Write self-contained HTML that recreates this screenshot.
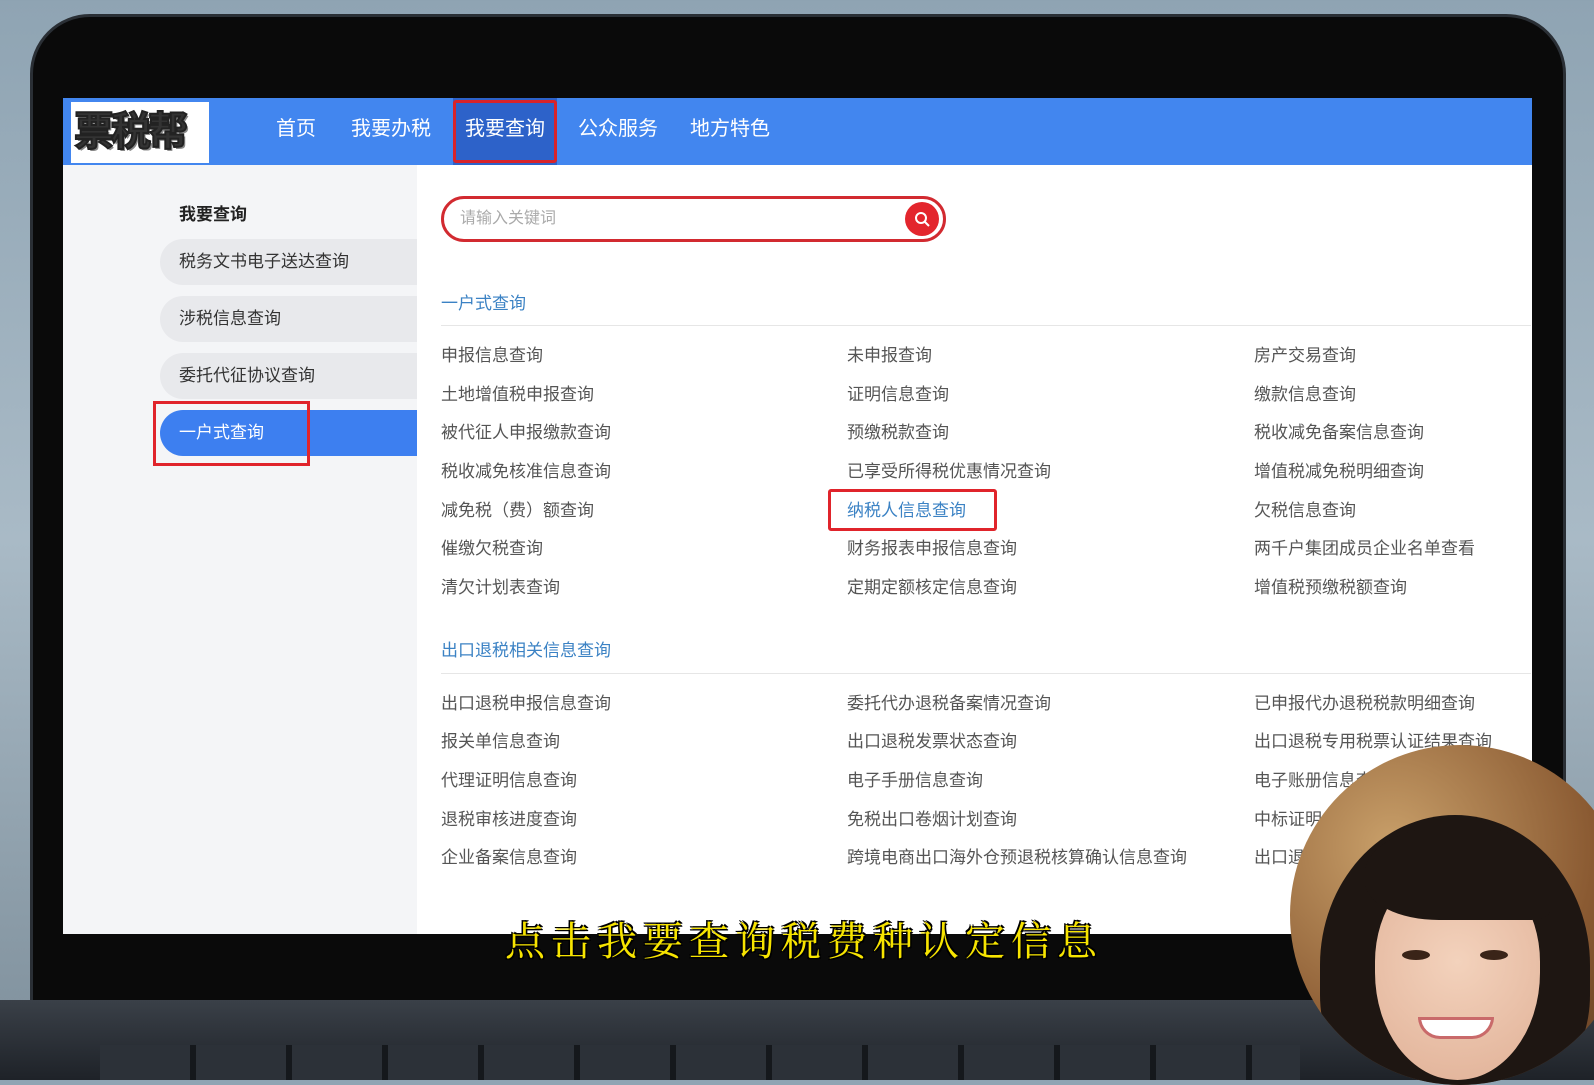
<!DOCTYPE html>
<html><head><meta charset="utf-8"><style>
*{margin:0;padding:0;box-sizing:border-box}
body{width:1594px;height:1080px;overflow:hidden;position:relative;font-family:"Liberation Sans","Noto Sans CJK SC",sans-serif;background:linear-gradient(180deg,#8fa4b3 0%,#a9bac6 50%,#7d8e9a 100%)}
.abs{position:absolute}
.t{position:absolute;font-size:17px;color:#555;white-space:nowrap;line-height:20px}
</style></head><body>
<div class="abs" style="left:30px;top:14px;width:1536px;height:1010px;background:#0a0a0a;border-radius:60px 60px 0 0;border:3px solid #2a2f35"></div>
<div class="abs" style="left:0;top:1000px;width:1594px;height:80px;background:linear-gradient(180deg,#3a4048,#1e2228)"></div>
<div class="abs" style="left:100px;top:1045px;width:1200px;height:35px;background:repeating-linear-gradient(90deg,#2c3138 0 90px,#15181c 90px 96px)"></div>
<div class="abs" style="left:63px;top:98px;width:1469px;height:836px;background:#fff"></div>
<div class="abs" style="left:63px;top:98px;width:1469px;height:67px;background:#4286ef"></div>
<div class="abs" style="left:71px;top:102px;width:138px;height:61px;background:#fff"></div>
<div class="abs" style="left:74px;top:104px;font-size:40px;font-weight:bold;color:#333;letter-spacing:-3px;line-height:56px;-webkit-text-stroke:2px #222;text-shadow:2px 2px 0 #888">票税帮</div>
<div class="abs" style="left:453px;top:98px;width:104px;height:67px;background:#2d62c9"></div>
<div class="abs" style="left:453px;top:100px;width:104px;height:63px;border:3px solid #d8232a;border-radius:3px"></div>
<div class="abs" style="top:117px;left:276px;font-size:20px;color:#fff;line-height:24px">首页</div>
<div class="abs" style="top:117px;left:351px;font-size:20px;color:#fff;line-height:24px">我要办税</div>
<div class="abs" style="top:117px;left:465px;font-size:20px;color:#fff;line-height:24px">我要查询</div>
<div class="abs" style="top:117px;left:578px;font-size:20px;color:#fff;line-height:24px">公众服务</div>
<div class="abs" style="top:117px;left:690px;font-size:20px;color:#fff;line-height:24px">地方特色</div>
<div class="abs" style="left:63px;top:165px;width:354px;height:769px;background:#f4f5f7"></div>
<div class="abs" style="left:179px;top:200px;font-size:17px;font-weight:bold;color:#222">我要查询</div>
<div class="abs" style="left:160px;top:239px;width:257px;height:46px;background:#e8e9ec;border-radius:23px 0 0 23px"></div>
<div class="abs" style="left:160px;top:296px;width:257px;height:46px;background:#e8e9ec;border-radius:23px 0 0 23px"></div>
<div class="abs" style="left:160px;top:353px;width:257px;height:46px;background:#e8e9ec;border-radius:23px 0 0 23px"></div>
<div class="abs" style="left:160px;top:410px;width:257px;height:46px;background:#3d7ff0;border-radius:23px 0 0 23px"></div>
<div class="abs" style="left:153px;top:401px;width:157px;height:65px;border:3px solid #e0242b"></div>
<div class="t" style="left:179px;top:252px;color:#333">税务文书电子送达查询</div>
<div class="t" style="left:179px;top:309px;color:#333">涉税信息查询</div>
<div class="t" style="left:179px;top:366px;color:#333">委托代征协议查询</div>
<div class="t" style="left:179px;top:423px;color:#fff">一户式查询</div>
<div class="abs" style="left:441px;top:196px;width:505px;height:46px;border:3px solid #d22a30;border-radius:23px"></div>
<div class="t" style="left:460px;top:209px;color:#aaa;font-size:16px">请输入关键词</div>
<div class="abs" style="left:905px;top:202px;width:34px;height:34px;border-radius:50%;background:#e3262d"></div>
<svg class="abs" style="left:913px;top:210px" width="18" height="18" viewBox="0 0 18 18"><circle cx="8" cy="8" r="5" fill="none" stroke="#fff" stroke-width="2"/><path d="M12 12l4 4" stroke="#fff" stroke-width="2"/></svg>
<div class="t" style="left:441px;top:294px;color:#3b82c4">一户式查询</div>
<div class="abs" style="left:441px;top:325px;width:1090px;height:1px;background:#e6e6e6"></div>
<div class="t" style="left:441px;top:346px">申报信息查询</div>
<div class="t" style="left:441px;top:385px">土地增值税申报查询</div>
<div class="t" style="left:441px;top:423px">被代征人申报缴款查询</div>
<div class="t" style="left:441px;top:462px">税收减免核准信息查询</div>
<div class="t" style="left:441px;top:501px">减免税（费）额查询</div>
<div class="t" style="left:441px;top:539px">催缴欠税查询</div>
<div class="t" style="left:441px;top:578px">清欠计划表查询</div>
<div class="t" style="left:847px;top:346px">未申报查询</div>
<div class="t" style="left:847px;top:385px">证明信息查询</div>
<div class="t" style="left:847px;top:423px">预缴税款查询</div>
<div class="t" style="left:847px;top:462px">已享受所得税优惠情况查询</div>
<div class="t" style="left:847px;top:501px;color:#3b82c4">纳税人信息查询</div>
<div class="abs" style="left:828px;top:489px;width:169px;height:42px;border:3px solid #e0242b;border-radius:3px"></div>
<div class="t" style="left:847px;top:539px">财务报表申报信息查询</div>
<div class="t" style="left:847px;top:578px">定期定额核定信息查询</div>
<div class="t" style="left:1254px;top:346px">房产交易查询</div>
<div class="t" style="left:1254px;top:385px">缴款信息查询</div>
<div class="t" style="left:1254px;top:423px">税收减免备案信息查询</div>
<div class="t" style="left:1254px;top:462px">增值税减免税明细查询</div>
<div class="t" style="left:1254px;top:501px">欠税信息查询</div>
<div class="t" style="left:1254px;top:539px">两千户集团成员企业名单查看</div>
<div class="t" style="left:1254px;top:578px">增值税预缴税额查询</div>
<div class="t" style="left:441px;top:641px;color:#3b82c4">出口退税相关信息查询</div>
<div class="abs" style="left:441px;top:673px;width:1090px;height:1px;background:#e6e6e6"></div>
<div class="t" style="left:441px;top:694px">出口退税申报信息查询</div>
<div class="t" style="left:441px;top:732px">报关单信息查询</div>
<div class="t" style="left:441px;top:771px">代理证明信息查询</div>
<div class="t" style="left:441px;top:810px">退税审核进度查询</div>
<div class="t" style="left:441px;top:848px">企业备案信息查询</div>
<div class="t" style="left:847px;top:694px">委托代办退税备案情况查询</div>
<div class="t" style="left:847px;top:732px">出口退税发票状态查询</div>
<div class="t" style="left:847px;top:771px">电子手册信息查询</div>
<div class="t" style="left:847px;top:810px">免税出口卷烟计划查询</div>
<div class="t" style="left:847px;top:848px">跨境电商出口海外仓预退税核算确认信息查询</div>
<div class="t" style="left:1254px;top:694px">已申报代办退税税款明细查询</div>
<div class="t" style="left:1254px;top:732px">出口退税专用税票认证结果查询</div>
<div class="t" style="left:1254px;top:771px">电子账册信息查询</div>
<div class="t" style="left:1254px;top:810px">中标证明信息查询</div>
<div class="t" style="left:1254px;top:848px">出口退税信息查询</div>
<div class="abs" style="left:505px;top:910px;font-size:40px;font-weight:normal;color:#f7e400;letter-spacing:6px;text-shadow:1.5px 1.5px 0 #000,-1.5px -1.5px 0 #000,1.5px -1.5px 0 #000,-1.5px 1.5px 0 #000;font-family:'Noto Serif CJK SC','Noto Sans CJK SC',serif">点击我要查询税费种认定信息</div>
<div class="abs" style="left:1290px;top:745px;width:340px;height:340px;border-radius:50%;overflow:hidden;background:radial-gradient(circle at 30% 30%,#c9a06a,#8a5a32 60%,#5a3820)">
  <div class="abs" style="left:30px;top:70px;width:270px;height:300px;border-radius:50% 50% 40% 40%;background:#1e1612"></div>
  <div class="abs" style="left:85px;top:120px;width:165px;height:215px;border-radius:45% 45% 50% 50%;background:radial-gradient(circle at 50% 45%,#f3d2bc,#e0b096)"></div>
  <div class="abs" style="left:75px;top:80px;width:185px;height:95px;border-radius:50% 50% 10% 40%;background:#1e1612"></div>
  <div class="abs" style="left:112px;top:205px;width:28px;height:10px;border-radius:50%;background:#3a2418"></div>
  <div class="abs" style="left:190px;top:205px;width:28px;height:10px;border-radius:50%;background:#3a2418"></div>
  <div class="abs" style="left:128px;top:272px;width:76px;height:22px;border-radius:0 0 38px 38px;background:#fff;border:3px solid #c96a6a"></div>
</div>
</body></html>
